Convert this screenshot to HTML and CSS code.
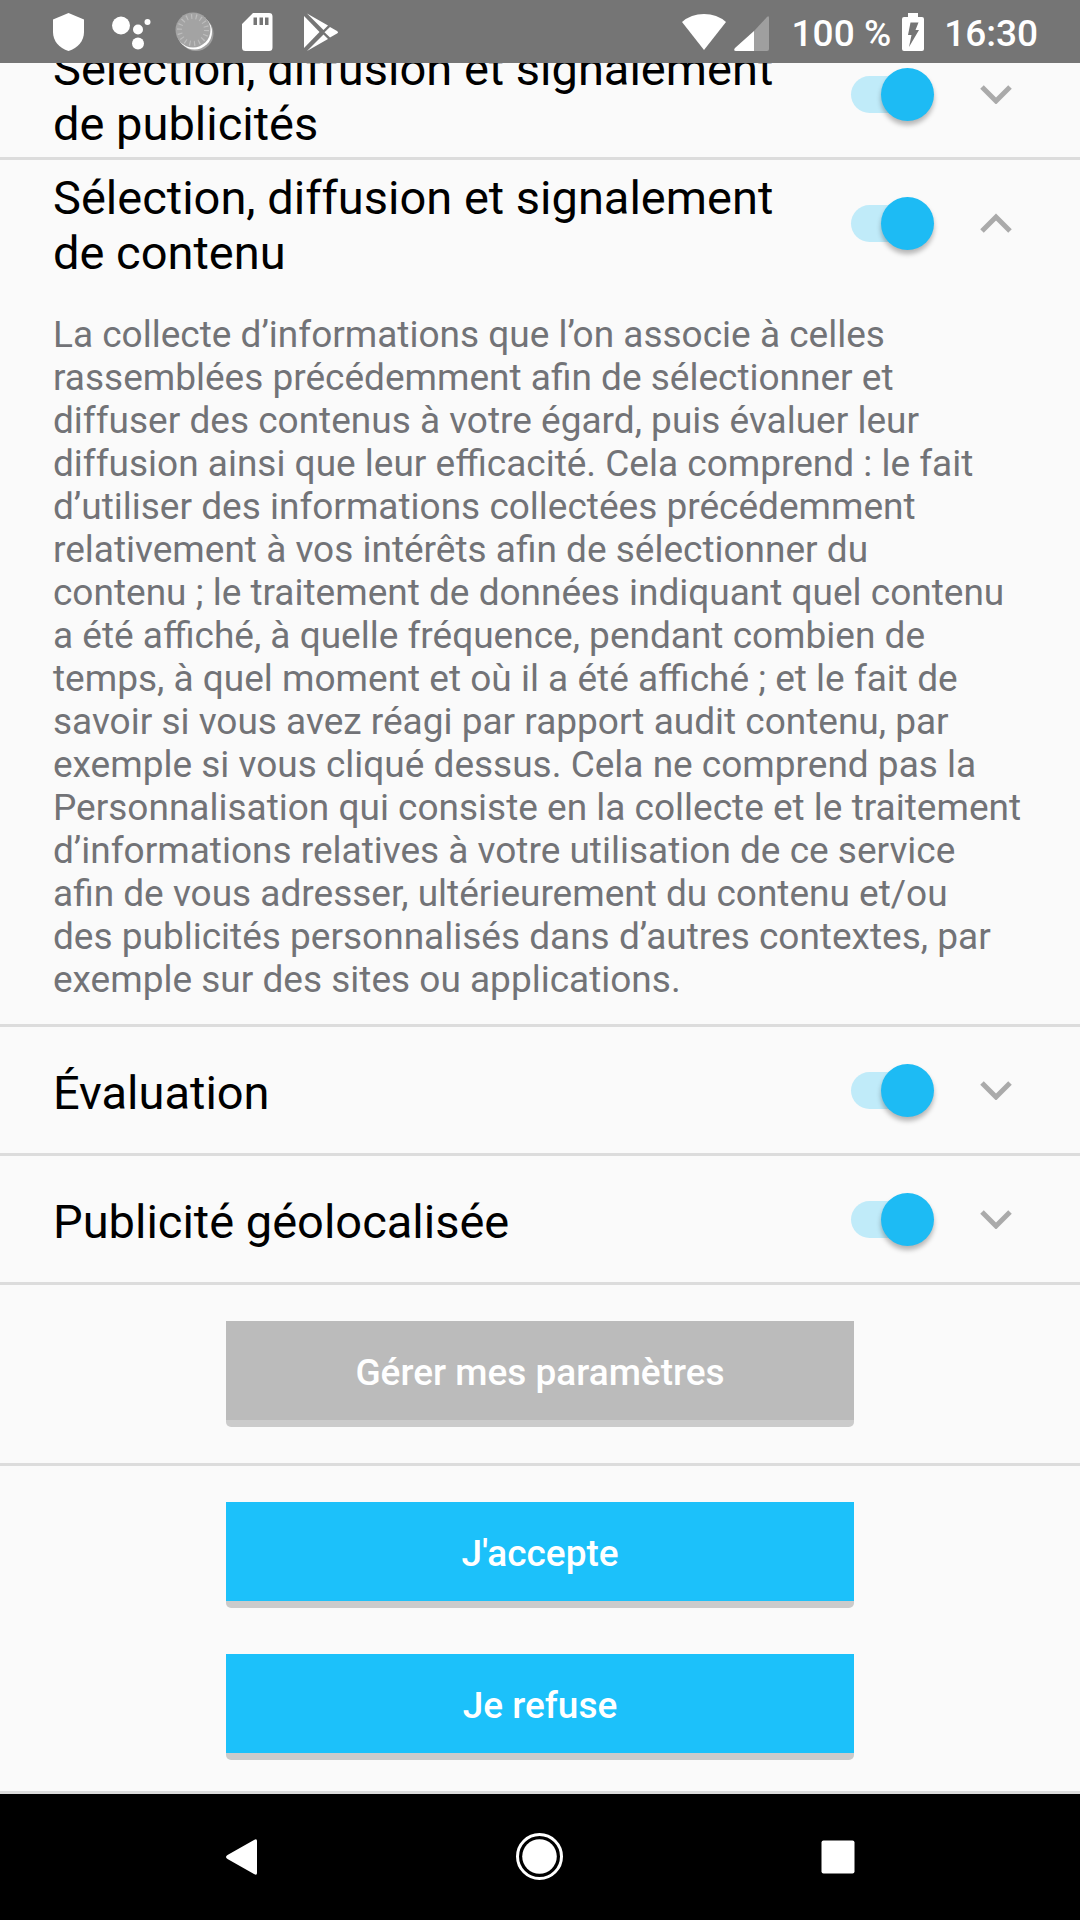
FILE: index.html
```html
<!DOCTYPE html>
<html lang="fr">
<head>
<meta charset="utf-8">
<meta name="viewport" content="width=device-width, initial-scale=1">
<title>Paramètres de confidentialité</title>
<link rel="stylesheet" href="styles.css">
</head>
<body>
<div class="screen">
  <header class="status">
    <div class="status-notifs">
      <svg class="notif" viewBox="0 0 48 48" aria-hidden="true"><path fill="#fff" d="M24.500 5 40 11.500V24c0 9-6 16-15.500 19C15 40 9 33 9 24V11.500z"/></svg>
      <svg class="notif" viewBox="0 0 48 48" aria-hidden="true"><g fill="#fff"><circle cx="14" cy="17.500" r="9"/><circle cx="31" cy="21.500" r="5"/><circle cx="40.500" cy="14" r="3"/><circle cx="31" cy="35.500" r="6"/></g></svg>
      <svg class="notif" viewBox="0 0 48 48" aria-hidden="true"><circle cx="26" cy="25.500" r="17.500" fill="#a0a0a0"/><circle cx="24.500" cy="24" r="17.500" fill="#fff"/><circle cx="23" cy="22" r="17.500" fill="#a3a3a3"/><circle cx="23" cy="22" r="13.500" fill="none" stroke="#bdbdbd" stroke-width="5" stroke-dasharray="1.200 3.512"/></svg>
      <svg class="notif" viewBox="0 0 48 48" aria-hidden="true"><path fill="#fff" fill-rule="evenodd" d="M20 5H36a3.500 3.500 0 0 1 3.500 3.500v31A3.500 3.500 0 0 1 36 43H12.500A3.500 3.500 0 0 1 9 39.500V16zM20.500 9.500v7.500h3.500V9.500zm6 0v7.500H30V9.500zm5.500 0v7.500h3.500V9.500z"/></svg>
      <svg class="notif" viewBox="0 0 48 48" aria-hidden="true"><g fill="#fff"><path d="M8 8 23.500 24 8 40z"/><path d="M11 5.500 32 17.500 27.500 22z"/><path d="M27.500 26.500 32 31 11 43z"/><path d="M34 19 41 23q2 1.300 0 2.500L34 29.500 28.500 24.300z"/></g></svg>
    </div>
    <div class="status-system">
      <svg class="wifi" viewBox="0 0 44 38" aria-hidden="true"><path fill="#fff" d="M22 37 0 9Q9 1 22 1t22 8z" stroke-linejoin="round"/></svg>
      <svg class="signal" viewBox="0 0 36 38" aria-hidden="true"><path fill="#9f9f9f" d="M20 18 33 4q2-2 2 1V36q0 2-2 2H20z"/><path fill="#fff" d="M20 18V38H2q-3 0-1-3z"/></svg>
      <span class="level">100 %</span>
      <svg class="battery" viewBox="0 0 22 38" aria-hidden="true"><path fill="#fff" fill-rule="evenodd" d="M6 0H16V4H20q2 0 2 2V36q0 2-2 2H2q-2 0-2-2V6q0-2 2-2H6zM8.500 9.500 6 22H9.500L7 34 17 17H13.500L16.500 9.500z"/></svg>
      <time class="clock">16:30</time>
    </div>
  </header>

  <main class="content">
    <section class="item">
      <div class="item-head">
        <label class="item-title" for="ads">Sélection, diffusion et signalement de publicités</label>
        <input class="switch" type="checkbox" role="switch" id="ads" checked>
        <button class="toggle" type="button" aria-expanded="false" aria-label="Afficher"><svg class="chevron" viewBox="0 0 32 20" aria-hidden="true"><path d="M2 3 16 17 30 3"/></svg></button>
      </div>
    </section>

    <section class="item">
      <div class="item-head">
        <label class="item-title" for="content">Sélection, diffusion et signalement de contenu</label>
        <input class="switch" type="checkbox" role="switch" id="content" checked>
        <button class="toggle" type="button" aria-expanded="true" aria-label="Masquer"><svg class="chevron" viewBox="0 0 32 20" aria-hidden="true"><path d="M2 18 16 4 30 18"/></svg></button>
      </div>
      <p class="item-text">La collecte d’informations que l’on associe à celles rassemblées précédemment afin de sélectionner et diffuser des contenus à votre égard, puis évaluer leur diffusion ainsi que leur efficacité. Cela comprend : le fait d’utiliser des informations collectées précédemment relativement à vos intérêts afin de sélectionner du contenu&nbsp;; le traitement de données indiquant quel contenu a été affiché, à quelle fréquence, pendant combien de temps, à quel moment et où il a été affiché&nbsp;; et le fait de savoir si vous avez réagi par rapport audit contenu, par exemple si vous cliqué dessus. Cela ne comprend pas la Personnalisation qui consiste en la collecte et le traitement d’informations relatives à votre utilisation de ce service afin de vous adresser, ultérieurement du contenu et/ou des&nbsp;publicités personnalisés dans d’autres contextes, par exemple sur des sites ou applications.</p>
    </section>

    <section class="item">
      <div class="item-head">
        <label class="item-title" for="measure">Évaluation</label>
        <input class="switch" type="checkbox" role="switch" id="measure" checked>
        <button class="toggle" type="button" aria-expanded="false" aria-label="Afficher"><svg class="chevron" viewBox="0 0 32 20" aria-hidden="true"><path d="M2 3 16 17 30 3"/></svg></button>
      </div>
    </section>

    <section class="item">
      <div class="item-head">
        <label class="item-title" for="geo">Publicité géolocalisée</label>
        <input class="switch" type="checkbox" role="switch" id="geo" checked>
        <button class="toggle" type="button" aria-expanded="false" aria-label="Afficher"><svg class="chevron" viewBox="0 0 32 20" aria-hidden="true"><path d="M2 3 16 17 30 3"/></svg></button>
      </div>
    </section>

    <section class="actions">
      <button class="action action-muted" type="button">Gérer mes paramètres</button>
    </section>
    <section class="actions actions-last">
      <button class="action" type="button">J'accepte</button>
      <button class="action" type="button">Je refuse</button>
    </section>
  </main>

  <nav class="navbar" aria-label="Système">
    <div class="navbar-keys">
      <button class="key" type="button" aria-label="Retour"><svg class="key-icon" viewBox="0 0 48 48" aria-hidden="true"><path fill="#fff" d="M39 8V40q0 3-3 1L9.500 26q-3-2 0-4L36 7q3-2 3 1z"/></svg></button>
      <button class="key" type="button" aria-label="Accueil"><svg class="key-icon" viewBox="0 0 48 48" aria-hidden="true"><circle cx="23.500" cy="23.500" r="22" fill="none" stroke="#fff" stroke-width="3"/><circle cx="23.500" cy="23.500" r="17.300" fill="#fff"/></svg></button>
      <button class="key" type="button" aria-label="Applications récentes"><svg class="key-icon" viewBox="0 0 48 48" aria-hidden="true"><rect x="7.500" y="7.500" width="33" height="33" rx="2" fill="#fff"/></svg></button>
    </div>
  </nav>
</div>
</body>
</html>
```
FILE: styles.css
```css
* {
  box-sizing: border-box;
}

body {
  margin: 0;
  background: #fafafa;
  font-family: Roboto, "Liberation Sans", sans-serif;
}

button {
  margin: 0;
  padding: 0;
  border: 0;
  background: none;
  font-family: inherit;
}

svg {
  display: block;
  flex: none;
}

.screen {
  display: flex;
  flex-direction: column;
  height: 100vh;
}

/* Status bar */
.status {
  display: flex;
  flex: none;
  justify-content: space-between;
  height: 63px;
  padding: 0 42px 0 44px;
  background: #757575;
  color: #fff;
  font-size: 37px;
  font-weight: 500;
  line-height: 43px;
}

.status-notifs {
  display: flex;
  align-items: center;
  gap: 15px;
}

.notif {
  width: 48px;
  height: 48px;
}

.status-system {
  display: flex;
  align-items: center;
}

.wifi {
  width: 44px;
  height: 38px;
}

.signal {
  width: 36px;
  height: 38px;
  margin-left: 8px;
}

.level {
  margin-left: 22px;
  padding-top: 4px;
}

.battery {
  width: 22px;
  height: 38px;
  margin-left: 11px;
}

.clock {
  margin-left: 20px;
  padding-top: 4px;
}

/* Consent list, scrolled to its end */
.content {
  display: flex;
  flex: 1;
  flex-direction: column;
  justify-content: flex-end;
  min-height: 0;
  overflow: hidden;
}

.item,
.actions {
  flex: none;
  border-bottom: 3px solid #dcdcdc;
}

.item-head {
  display: flex;
  align-items: center;
  min-height: 126px;
  padding: 0 48px 0 53px;
}

.item-title {
  flex: 1;
  padding: 4px 60px 0 0;
  color: #000;
  font-size: 47px;
  line-height: 55px;
}

.switch {
  display: flex;
  flex: none;
  align-items: center;
  position: relative;
  width: 83px;
  height: 53px;
  margin: 0;
  appearance: none;
}

/* Track */
.switch::before {
  content: "";
  width: 74px;
  height: 37px;
  border-radius: 19px;
  background: #c0ebf9;
}

/* Thumb, lying over the track */
.switch::after {
  content: "";
  position: absolute;
  top: 0;
  left: 0;
  width: 53px;
  height: 53px;
  border-radius: 50%;
  background: #1dbbf4;
  box-shadow: 0 4px 5px rgba(0, 0, 0, 0.28);
}

.switch:checked::after {
  right: 0;
  left: auto;
}

.toggle {
  display: flex;
  flex: none;
  align-items: center;
  justify-content: center;
  width: 72px;
  height: 72px;
  margin-left: 26px;
}

.chevron {
  width: 32px;
  height: 20px;
  fill: none;
  stroke: #aaa;
  stroke-width: 5;
}

.item-text {
  margin: 0;
  padding: 27px 57px 23px 53px;
  color: #727377;
  font-size: 37px;
  line-height: 43px;
}

/* Buttons */
.actions {
  display: flex;
  flex-direction: column;
  align-items: center;
  gap: 46px;
  padding: 36px 24px;
}

.actions-last {
  padding-bottom: 31px;
}

.action {
  width: 100%;
  max-width: 628px;
  padding: 30px 0 26px;
  border-radius: 0 0 5px 5px;
  border-bottom: 7px solid #cbcbcb;
  background: #1cc1fa;
  background-clip: padding-box;
  color: #fff;
  font-size: 37px;
  font-weight: 500;
  line-height: 43px;
}

.action-muted {
  background-color: #bbb;
}

/* Navigation bar */
.navbar {
  display: flex;
  flex: none;
  justify-content: center;
  height: 126px;
  background: #000;
}

.navbar-keys {
  display: grid;
  grid-template-columns: repeat(3, 1fr);
  width: 100%;
  max-width: 894px;
}

.key {
  display: flex;
  align-items: center;
  justify-content: center;
}

.key-icon {
  width: 48px;
  height: 48px;
}
```
